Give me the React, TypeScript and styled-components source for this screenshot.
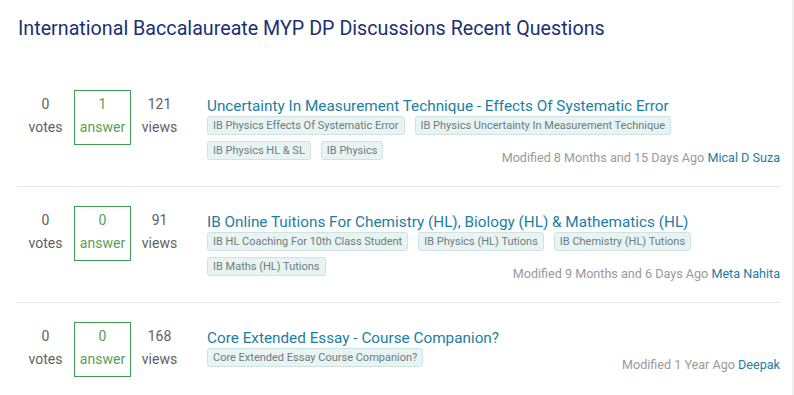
import styled, { createGlobalStyle } from 'styled-components'

const GlobalStyle = createGlobalStyle`
  html, body {
    margin: 0;
    padding: 0;
    background: #ffffff;
    font-family: Roboto, 'Liberation Sans', sans-serif;
  }
`

type Question = {
  votes: number
  answers: number
  views: number
  title: string
  tags: string[]
  modified: string
  author: string
}

const questions: Question[] = [
  {
    votes: 0,
    answers: 1,
    views: 121,
    title: 'Uncertainty In Measurement Technique - Effects Of Systematic Error',
    tags: [
      'IB Physics Effects Of Systematic Error',
      'IB Physics Uncertainty In Measurement Technique',
      'IB Physics HL & SL',
      'IB Physics',
    ],
    modified: 'Modified 8 Months and 15 Days Ago',
    author: 'Mical D Suza',
  },
  {
    votes: 0,
    answers: 0,
    views: 91,
    title: 'IB Online Tuitions For Chemistry (HL), Biology (HL) & Mathematics (HL)',
    tags: [
      'IB HL Coaching For 10th Class Student',
      'IB Physics (HL) Tutions',
      'IB Chemistry (HL) Tutions',
      'IB Maths (HL) Tutions',
    ],
    modified: 'Modified 9 Months and 6 Days Ago',
    author: 'Meta Nahita',
  },
  {
    votes: 0,
    answers: 0,
    views: 168,
    title: 'Core Extended Essay - Course Companion?',
    tags: ['Core Extended Essay Course Companion?'],
    modified: 'Modified 1 Year Ago',
    author: 'Deepak',
  },
]

const Page = styled.main`
  min-height: 395px;
  box-sizing: border-box;
  border-right: 2px solid #eeeeee;
  width: 794px;
  padding: 15px 12px 0 17px;
`

const Heading = styled.h1`
  margin: 0 0 28px 1px;
  font-size: 19.7px;
  line-height: 28px;
  font-weight: 400;
  color: #1b3073;
`

const List = styled.section`
  display: flex;
  flex-direction: column;
`

const Row = styled.article`
  display: flex;
  align-items: flex-start;
  padding: 19px 0 18px;
  border-bottom: 1px solid #e6e6e6;
`

const Stats = styled.div`
  display: flex;
  flex-shrink: 0;
  margin-right: 19px;
`

const Stat = styled.div<{ $boxed?: boolean }>`
  box-sizing: border-box;
  width: 57px;
  height: 55px;
  padding: 2px 0 5px;
  display: flex;
  flex-direction: column;
  align-items: center;
  font-size: 14px;
  line-height: 23px;
  color: ${({ $boxed }) => ($boxed ? '#5c9d55' : '#616161')};
  border: 1px solid ${({ $boxed }) => ($boxed ? '#3f9b4e' : 'transparent')};
`

const Body = styled.div`
  flex: 1;
  min-width: 0;
`

const QuestionTitle = styled.a`
  display: block;
  margin-top: 7px;
  font-size: 15.3px;
  line-height: 19px;
  color: #1b7ea3;
  text-decoration: none;
`

const Footer = styled.div`
  display: flex;
  flex-wrap: wrap;
  align-items: flex-start;
  gap: 6px 10px;
  padding-right: 4px;
`

const Tag = styled.span`
  box-sizing: border-box;
  height: 19px;
  padding: 0 5px;
  font-size: 11px;
  line-height: 17px;
  color: #6e7d7d;
  background: #e8f3f3;
  border: 1px solid #cfe3e3;
  border-radius: 3px;
  white-space: nowrap;
`

const Meta = styled.div`
  margin: 7px -4px 0 auto;
  font-size: 12.6px;
  line-height: 20px;
  color: #9a9a9a;
  white-space: nowrap;
`

const Author = styled.a`
  color: #1b7ea3;
  text-decoration: none;
`

export default function App() {
  return (
    <>
      <GlobalStyle />
      <Page>
        <Heading>International Baccalaureate MYP DP Discussions Recent Questions</Heading>
        <List>
          {questions.map((q) => (
            <Row key={q.title}>
              <Stats>
                <Stat>
                  <span>{q.votes}</span>
                  <span>votes</span>
                </Stat>
                <Stat $boxed>
                  <span>{q.answers}</span>
                  <span>answer</span>
                </Stat>
                <Stat>
                  <span>{q.views}</span>
                  <span>views</span>
                </Stat>
              </Stats>
              <Body>
                <QuestionTitle href="#">{q.title}</QuestionTitle>
                <Footer>
                  {q.tags.map((t) => (
                    <Tag key={t}>{t}</Tag>
                  ))}
                  <Meta>
                    {q.modified} <Author href="#">{q.author}</Author>
                  </Meta>
                </Footer>
              </Body>
            </Row>
          ))}
        </List>
      </Page>
    </>
  )
}
